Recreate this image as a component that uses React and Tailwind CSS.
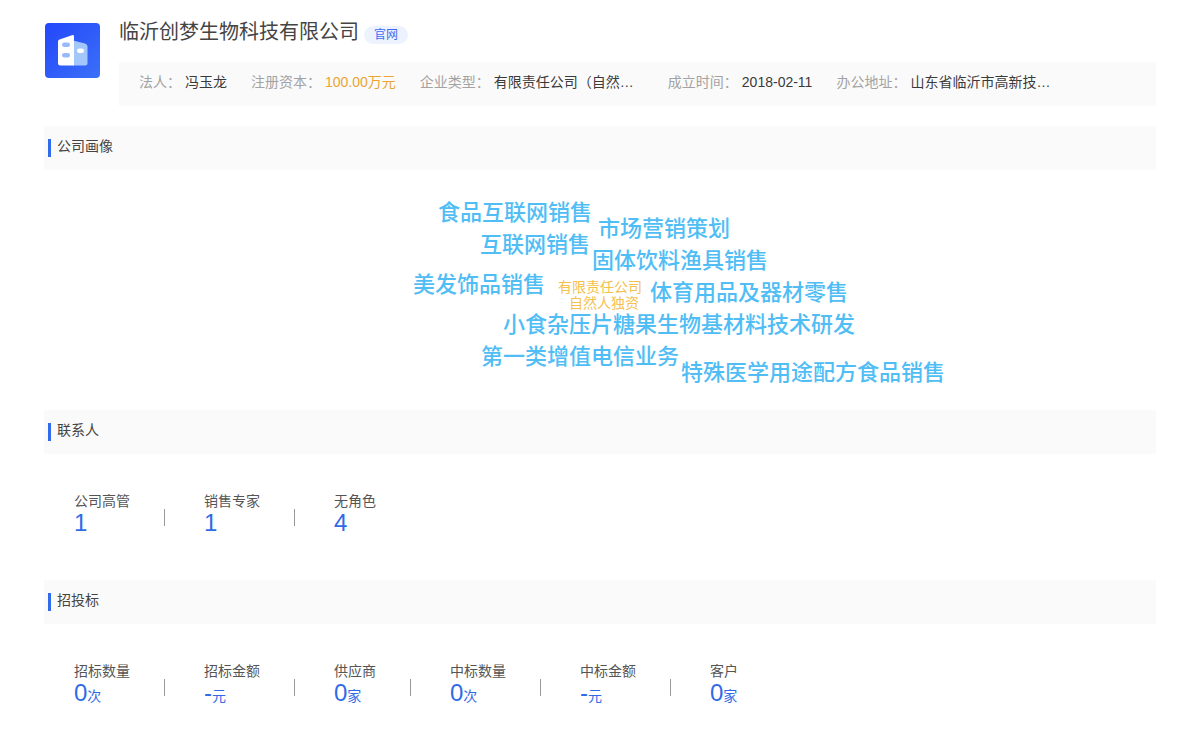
import React from 'react'

const infoItems = [
  { label: '法人：', value: '冯玉龙' },
  { label: '注册资本：', value: '100.00万元', highlight: true },
  { label: '企业类型：', value: '有限责任公司（自然…', wide: true },
  { label: '成立时间：', value: '2018-02-11' },
  { label: '办公地址：', value: '山东省临沂市高新技…', wide: true }
]

// x / y are relative to the cloud canvas
const cloudWords = [
  { text: '食品互联网销售', x: 38, y: 7 },
  { text: '市场营销策划', x: 198, y: 23 },
  { text: '互联网销售', x: 80, y: 39 },
  { text: '固体饮料渔具销售', x: 192, y: 55 },
  { text: '美发饰品销售', x: 13, y: 79 },
  { text: '有限责任公司', x: 158, y: 87, small: true },
  { text: '自然人独资', x: 169, y: 103, small: true },
  { text: '体育用品及器材零售', x: 250, y: 87 },
  { text: '小食杂压片糖果生物基材料技术研发', x: 103, y: 119 },
  { text: '第一类增值电信业务', x: 81, y: 151 },
  { text: '特殊医学用途配方食品销售', x: 281, y: 167 }
]

const contactStats = [
  { label: '公司高管', value: '1' },
  { label: '销售专家', value: '1' },
  { label: '无角色', value: '4' }
]

const bidStats = [
  { label: '招标数量', value: '0', unit: '次' },
  { label: '招标金额', value: '-', unit: '元' },
  { label: '供应商', value: '0', unit: '家' },
  { label: '中标数量', value: '0', unit: '次' },
  { label: '中标金额', value: '-', unit: '元' },
  { label: '客户', value: '0', unit: '家' }
]

const CompanyLogo = () => (
  <svg className="w-14 h-14 shrink-0" viewBox="0 0 56 56" aria-hidden="true">
    <defs>
      <linearGradient id="logoBg" x1="0" y1="0" x2="1" y2="1">
        <stop offset="0" stopColor="#2347fb" />
        <stop offset="1" stopColor="#3b70f8" />
      </linearGradient>
    </defs>
    <rect x="1" y="1" width="55" height="55" rx="4" fill="url(#logoBg)" />
    <path d="M29 18.500L41 21.500Q43.500 22.300 43.500 24.500V41Q43.500 43.500 41 43.500H29Z" fill="#a3c6fb" />
    <path d="M15.500 17.500Q14 18 14 19.500V41Q14 43.500 16.500 43.500H30V14.500Q30 12.500 28 13.200Z" fill="#fff" />
    <rect x="18" y="20.500" width="8" height="4.500" rx="2.200" fill="#96bbf8" />
    <rect x="18" y="31" width="8" height="4.500" rx="2.200" fill="#96bbf8" />
    <rect x="33" y="26.500" width="7" height="4.500" rx="2.200" fill="#fff" />
  </svg>
)

const SectionHeader = ({ title }) => (
  <div className="flex items-center h-11 bg-[#fafafa] pl-1">
    <span className="w-[3px] h-[18px] bg-[#2f6bea]" />
    <h2 className="ml-1.5 pb-1 text-sm text-[#444]">{title}</h2>
  </div>
)

const StatList = ({ items }) => (
  <ul className="flex pt-9 pb-[46px] pl-[30px]">
    {items.map((item, index) => (
      <li key={item.label} className="flex">
        {index > 0 && <span className="w-px h-[17px] mt-[19px] ml-[34px] mr-[39px] bg-[#999]" />}
        <div>
          <p className="text-sm leading-[22px] text-[#555]">{item.label}</p>
          <p className="text-2xl leading-[22px] text-[#2f6be6]">
            {item.value}
            {item.unit && <span className="text-sm leading-[22px]">{item.unit}</span>}
          </p>
        </div>
      </li>
    ))}
  </ul>
)

const App = () => {
  return (
    <main className="px-11 pt-[22px] bg-white font-['Liberation_Sans','Noto_Sans_CJK_SC',sans-serif]">
      <header className="flex gap-[19px]">
        <CompanyLogo />
        <div className="flex-1 min-w-0">
          <div className="flex items-start gap-[5px] h-10">
            <h1 className="text-xl leading-5 text-[#444]">临沂创梦生物科技有限公司</h1>
            <a href="#" className="mt-1 px-2.5 rounded-full bg-[#edf3fe] text-xs leading-[18px] text-[#3c6df0]">
              官网
            </a>
          </div>
          <dl className="flex items-center gap-6 h-11 px-5 pb-1 bg-[#fafafa] text-sm">
            {infoItems.map((item) => (
              <div key={item.label} className="flex gap-1 whitespace-nowrap">
                <dt className="text-[#a3a3a3]">{item.label}</dt>
                <dd className={`${item.wide ? 'w-[150px]' : ''} ${item.highlight ? 'text-[#eaa434]' : 'text-[#3a3a3a]'}`}>
                  {item.value}
                </dd>
              </div>
            ))}
          </dl>
        </div>
      </header>

      <section className="mt-5">
        <SectionHeader title="公司画像" />
        <div className="py-5">
          {/* Word cloud */}
          <div className="relative w-[600px] h-[200px] mx-auto translate-x-[100px]">
            {cloudWords.map((word) => (
              <span
                key={word.text}
                className={`absolute whitespace-nowrap ${
                  word.small ? 'text-sm text-[#f5c14e]' : 'text-[22px] leading-8 font-medium text-[#50bdf5]'
                }`}
                style={{ left: word.x, top: word.y }}
              >
                {word.text}
              </span>
            ))}
          </div>
        </div>
      </section>

      <section>
        <SectionHeader title="联系人" />
        <StatList items={contactStats} />
      </section>

      <section>
        <SectionHeader title="招投标" />
        <StatList items={bidStats} />
      </section>
    </main>
  )
}

export default App
